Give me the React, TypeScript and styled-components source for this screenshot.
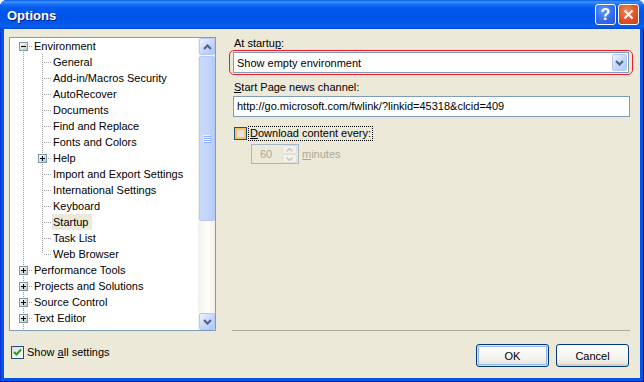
import React from "react";
import styled, { createGlobalStyle } from "styled-components";

type TreeNode = {
  label: string;
  children?: TreeNode[];
  expanded?: boolean;
  selected?: boolean;
};

type Row = {
  label: string;
  level: number;
  expander: "plus" | "minus" | null;
  first: boolean;
  last: boolean;
  guides: boolean[];
  selected: boolean;
};

const leaf = (label: string, selected = false): TreeNode => ({ label, selected });
const closed = (label: string): TreeNode => ({ label, children: [leaf("x")] });

const tree: TreeNode[] = [
  {
    label: "Environment",
    expanded: true,
    children: [
      leaf("General"),
      leaf("Add-in/Macros Security"),
      leaf("AutoRecover"),
      leaf("Documents"),
      leaf("Find and Replace"),
      leaf("Fonts and Colors"),
      closed("Help"),
      leaf("Import and Export Settings"),
      leaf("International Settings"),
      leaf("Keyboard"),
      leaf("Startup", true),
      leaf("Task List"),
      leaf("Web Browser"),
    ],
  },
  closed("Performance Tools"),
  closed("Projects and Solutions"),
  closed("Source Control"),
  closed("Text Editor"),
  closed("Windows Forms Designer"),
  closed("XML Designer"),
];

function flatten(nodes: TreeNode[], level: number, guides: boolean[], out: Row[]) {
  nodes.forEach((n, i) => {
    const last = i === nodes.length - 1;
    const hasKids = !!n.children;
    out.push({
      label: n.label,
      level,
      expander: hasKids ? (n.expanded ? "minus" : "plus") : null,
      first: i === 0,
      last: level === 0 ? false : last,
      guides,
      selected: !!n.selected,
    });
    if (n.expanded && n.children) flatten(n.children, level + 1, [...guides, !last], out);
  });
  return out;
}

const rows = flatten(tree, 0, [], []);

const GlobalStyle = createGlobalStyle`
  html, body {
    margin: 0;
    padding: 0;
    background: #ffffff;
  }
  body {
    font-family: "Liberation Sans", Arial, sans-serif;
    font-size: 11px;
    color: #000;
  }
`;

const Window = styled.div`
  width: 644px;
  height: 382px;
  display: flex;
  flex-direction: column;
  background: #0055e5;
  border-radius: 7px 7px 0 0;
  overflow: hidden;
  box-shadow: inset -1px -1px 0 #00138c, inset 1px 0 0 #0831d9;
`;

const TitleBar = styled.div`
  height: 29px;
  flex: none;
  display: flex;
  align-items: center;
  padding: 0 5px 0 7px;
  gap: 2px;
  background: linear-gradient(
    180deg,
    #0a5ee8 0%,
    #3d95ff 7%,
    #1a72f4 14%,
    #0058ee 30%,
    #0054e8 55%,
    #0058ea 80%,
    #0a61ec 90%,
    #0048d4 100%
  );
`;

const Title = styled.div`
  flex: 1;
  color: #fff;
  font-weight: bold;
  font-size: 13px;
  text-shadow: 1px 1px 0 #0a1883;
  margin-top: 1px;
`;

const CaptionButton = styled.div<{ $kind: "help" | "close" }>`
  width: 21px;
  height: 21px;
  box-sizing: border-box;
  border: 1px solid #fff;
  border-radius: 3px;
  display: flex;
  align-items: center;
  justify-content: center;
  color: #fff;
  font-weight: bold;
  font-size: 16px;
  background: ${(p) =>
    p.$kind === "help"
      ? "radial-gradient(circle at 40% 30%, #6b9cf7 0%, #3a74ee 45%, #2254d8 100%)"
      : "radial-gradient(circle at 40% 30%, #f08a5e 0%, #e25a30 45%, #c33c14 100%)"};
`;

const Body = styled.div`
  flex: 1;
  margin: 0 4px 4px 4px;
  background: #ece9d8;
  display: flex;
  flex-direction: column;
  padding: 8px 7px 0 5px;
`;

const Main = styled.div`
  display: flex;
  gap: 13px;
  height: 294px;
`;

const TreeBox = styled.div`
  width: 207px;
  height: 294px;
  box-sizing: border-box;
  border: 1px solid #7f9db9;
  background: #fff;
  display: flex;
`;

const TreeList = styled.div`
  flex: 1;
  overflow: hidden;
`;

const TreeRow = styled.div`
  display: flex;
  height: 16px;
  line-height: 16px;
  white-space: nowrap;
`;

const RowLabel = styled.span<{ $selected: boolean }>`
  padding: 0 4px 0 1px;
  background: ${(p) => (p.$selected ? "#ece9d8" : "transparent")};
`;

const ScrollBar = styled.div`
  width: 17px;
  display: flex;
  flex-direction: column;
  background: linear-gradient(90deg, #f3f1ec 0%, #fefefb 60%, #f0eee6 100%);
`;

const ScrollButton = styled.div`
  width: 16px;
  height: 17px;
  margin: 0 0 0 1px;
  box-sizing: border-box;
  border: 1px solid #b5c8f5;
  border-radius: 2px;
  background: linear-gradient(135deg, #eef3fe 0%, #c5d6fc 55%, #b2c8f8 100%);
  display: flex;
  align-items: center;
  justify-content: center;
`;

const Track = styled.div`
  flex: 1;
  padding-top: 1px;
`;

const Thumb = styled.div`
  height: 165px;
  width: 16px;
  margin-left: 1px;
  box-sizing: border-box;
  border: 1px solid #b5c8f5;
  border-radius: 2px;
  background: linear-gradient(90deg, #c9d8fc 0%, #c6d5fc 50%, #b7cbf9 100%);
  display: flex;
  align-items: center;
  justify-content: center;
`;

const Panel = styled.div`
  flex: 1;
  display: flex;
  flex-direction: column;
`;

const FieldLabel = styled.div<{ $gap?: number }>`
  margin-left: 5px;
  margin-top: ${(p) => p.$gap ?? 0}px;
  height: 13px;
  line-height: 13px;
`;

const Highlight = styled.div`
  border: 1px solid #ee1c24;
  border-radius: 5px;
  padding: 1px 3px;
`;

const Combo = styled.div`
  height: 21px;
  box-sizing: border-box;
  border: 1px solid #7f9db9;
  background: #fff;
  display: flex;
  align-items: center;
`;

const ComboText = styled.span`
  flex: 1;
  padding-left: 3px;
`;

const ComboButton = styled(ScrollButton)`
  width: 15px;
  margin: 0 1px 0 0;
`;

const TextInput = styled.div`
  height: 21px;
  box-sizing: border-box;
  margin: 2px 3px 0 4px;
  border: 1px solid #7f9db9;
  background: #fff;
  padding-left: 3px;
  line-height: 19px;
`;

const CheckRow = styled.div`
  display: flex;
  align-items: center;
  height: 15px;
  margin-top: 9px;
  padding-left: 5px;
`;

const CheckBox = styled.div<{ $hover?: boolean }>`
  width: 13px;
  height: 13px;
  flex: none;
  box-sizing: border-box;
  border: 1px solid #1c5180;
  display: flex;
  align-items: center;
  justify-content: center;
  background: ${(p) =>
    p.$hover
      ? "linear-gradient(135deg, #dcdad2 0%, #ecebe6 100%)"
      : "linear-gradient(135deg, #dcdcd7 0%, #ffffff 100%)"};
  box-shadow: ${(p) => (p.$hover ? "inset 0 0 0 2px #f9c15a" : "none")};
`;

const FocusLabel = styled.span`
  margin-left: 2px;
  padding: 0 1px;
  line-height: 13px;
  outline: 1px dotted #000;
  outline-offset: 0;
`;

const SpinRow = styled.div`
  display: flex;
  align-items: center;
  margin-top: 3px;
  padding-left: 22px;
`;

const SpinBox = styled.div`
  width: 48px;
  height: 20px;
  box-sizing: border-box;
  border: 1px solid #a7b7c9;
  background: #ece9d8;
  display: flex;
  align-items: center;
`;

const SpinValue = styled.span`
  flex: 1;
  padding-left: 8px;
  color: #aca899;
`;

const SpinButtons = styled.div`
  width: 15px;
  height: 18px;
  display: flex;
  flex-direction: column;
  margin-right: 1px;
`;

const SpinHalf = styled.div`
  flex: 1;
  border: 1px solid #e2e0d6;
  border-radius: 2px;
  background: #f3f1ec;
  display: flex;
  align-items: center;
  justify-content: center;
`;

const Disabled = styled.span`
  margin-left: 3px;
  color: #aca899;
`;

const Separator = styled.div`
  margin: auto 3px 0 3px;
  height: 1px;
  background: #aca899;
`;

const Footer = styled.div`
  display: flex;
  align-items: flex-start;
  height: 23px;
  margin-top: 13px;
  padding: 0 4px 0 2px;
  gap: 7px;
`;

const FooterCheck = styled.label`
  flex: 1;
  display: flex;
  align-items: center;
  gap: 3px;
  height: 13px;
  margin-top: 2px;
  line-height: 13px;
`;

const Button = styled.div<{ $default?: boolean }>`
  width: 73px;
  height: 23px;
  box-sizing: border-box;
  border: 1px solid #003c74;
  border-radius: 3px;
  display: flex;
  align-items: center;
  justify-content: center;
  background: linear-gradient(180deg, #ffffff 0%, #f4f3ee 60%, #e6e3d6 100%);
  box-shadow: ${(p) =>
    p.$default
      ? "inset 0 0 0 1px #cee7ff, inset 0 0 0 2px #98b8ea"
      : "inset 0 -2px 0 #d6d0c5"};
`;

const U = styled.span`
  text-decoration: underline;
`;

const Chevron = ({ up = false }: { up?: boolean }) => (
  <svg width="9" height="6" viewBox="0 0 9 6">
    <path
      d={up ? "M1 5 L4.5 1.5 L8 5" : "M1 1 L4.5 4.5 L8 1"}
      fill="none"
      stroke="#4d6185"
      strokeWidth="2"
    />
  </svg>
);

const SmallArrow = ({ up = false }: { up?: boolean }) => (
  <svg width="7" height="4" viewBox="0 0 7 4">
    <path d={up ? "M0.5 3.5 L3.5 0.5 L6.5 3.5" : "M0.5 0.5 L3.5 3.5 L6.5 0.5"} fill="none" stroke="#c9c7ba" strokeWidth="1.5" />
  </svg>
);

const Grip = () => (
  <svg width="8" height="8" viewBox="0 0 8 8" shapeRendering="crispEdges">
    {[0, 2, 4, 6].map((y) => (
      <g key={y}>
        <rect x="0" y={y} width="7" height="1" fill="#eef4fe" />
        <rect x="1" y={y + 1} width="7" height="1" fill="#8cb0f8" />
      </g>
    ))}
  </svg>
);

const dots = { stroke: "#a0a0a0", strokeWidth: 1, strokeDasharray: "1 1" };

const Guide = ({ on }: { on: boolean }) => (
  <svg width="19" height="16" style={{ flex: "none" }} shapeRendering="crispEdges">
    {on && <line x1="13.5" y1="0" x2="13.5" y2="16" {...dots} />}
  </svg>
);

const NodeCell = ({ row }: { row: Row }) => (
  <svg width="23" height="16" style={{ flex: "none" }} shapeRendering="crispEdges">
    <defs>
      <linearGradient id="exp" x1="0" y1="0" x2="1" y2="1">
        <stop offset="0" stopColor="#ffffff" />
        <stop offset="1" stopColor="#c6c3b5" />
      </linearGradient>
    </defs>
    {!(row.level === 0 && row.first) && <line x1="13.5" y1="0" x2="13.5" y2="8" {...dots} />}
    {!row.last && <line x1="13.5" y1="8" x2="13.5" y2="16" {...dots} />}
    <line x1="15" y1="8.5" x2="23" y2="8.5" {...dots} />
    {row.expander && (
      <g>
        <rect x="9.5" y="4.5" width="8" height="8" fill="url(#exp)" stroke="#7a99ac" />
        <line x1="11" y1="8.5" x2="16" y2="8.5" stroke="#000" />
        {row.expander === "plus" && <line x1="13.5" y1="6" x2="13.5" y2="11" stroke="#000" />}
      </g>
    )}
  </svg>
);

const CheckMark = () => (
  <svg width="9" height="9" viewBox="0 0 9 9">
    <path d="M1 4 L3.5 6.5 L8 1.5" fill="none" stroke="#21a121" strokeWidth="2" />
  </svg>
);

const App = () => {
  return (
    <>
      <GlobalStyle />
      <Window>
        <TitleBar>
          <Title>Options</Title>
          <CaptionButton $kind="help">?</CaptionButton>
          <CaptionButton $kind="close">
            <svg width="11" height="11" viewBox="0 0 11 11">
              <path d="M1.5 1.5 L9.5 9.5 M9.5 1.5 L1.5 9.5" stroke="#fff" strokeWidth="2" />
            </svg>
          </CaptionButton>
        </TitleBar>
        <Body>
          <Main>
            <TreeBox>
              <TreeList>
                {rows.map((r, i) => (
                  <TreeRow key={i}>
                    {r.guides.map((g, j) => (
                      <Guide key={j} on={g} />
                    ))}
                    <NodeCell row={r} />
                    <RowLabel $selected={r.selected}>{r.label}</RowLabel>
                  </TreeRow>
                ))}
              </TreeList>
              <ScrollBar>
                <ScrollButton>
                  <Chevron up />
                </ScrollButton>
                <Track>
                  <Thumb>
                    <Grip />
                  </Thumb>
                </Track>
                <ScrollButton>
                  <Chevron />
                </ScrollButton>
              </ScrollBar>
            </TreeBox>
            <Panel>
              <FieldLabel>
                At startu<U>p</U>:
              </FieldLabel>
              <Highlight>
                <Combo>
                  <ComboText>Show empty environment</ComboText>
                  <ComboButton>
                    <Chevron />
                  </ComboButton>
                </Combo>
              </Highlight>
              <FieldLabel $gap={6}>
                <U>S</U>tart Page news channel:
              </FieldLabel>
              <TextInput>http://go.microsoft.com/fwlink/?linkid=45318&amp;clcid=409</TextInput>
              <CheckRow>
                <CheckBox $hover />
                <FocusLabel>
                  <U>D</U>ownload content every:
                </FocusLabel>
              </CheckRow>
              <SpinRow>
                <SpinBox>
                  <SpinValue>60</SpinValue>
                  <SpinButtons>
                    <SpinHalf>
                      <SmallArrow up />
                    </SpinHalf>
                    <SpinHalf>
                      <SmallArrow />
                    </SpinHalf>
                  </SpinButtons>
                </SpinBox>
                <Disabled>
                  <U>m</U>inutes
                </Disabled>
              </SpinRow>
              <Separator />
            </Panel>
          </Main>
          <Footer>
            <FooterCheck>
              <CheckBox>
                <CheckMark />
              </CheckBox>
              <span>
                Show <U>a</U>ll settings
              </span>
            </FooterCheck>
            <Button $default>OK</Button>
            <Button>Cancel</Button>
          </Footer>
        </Body>
      </Window>
    </>
  );
};

export default App;
